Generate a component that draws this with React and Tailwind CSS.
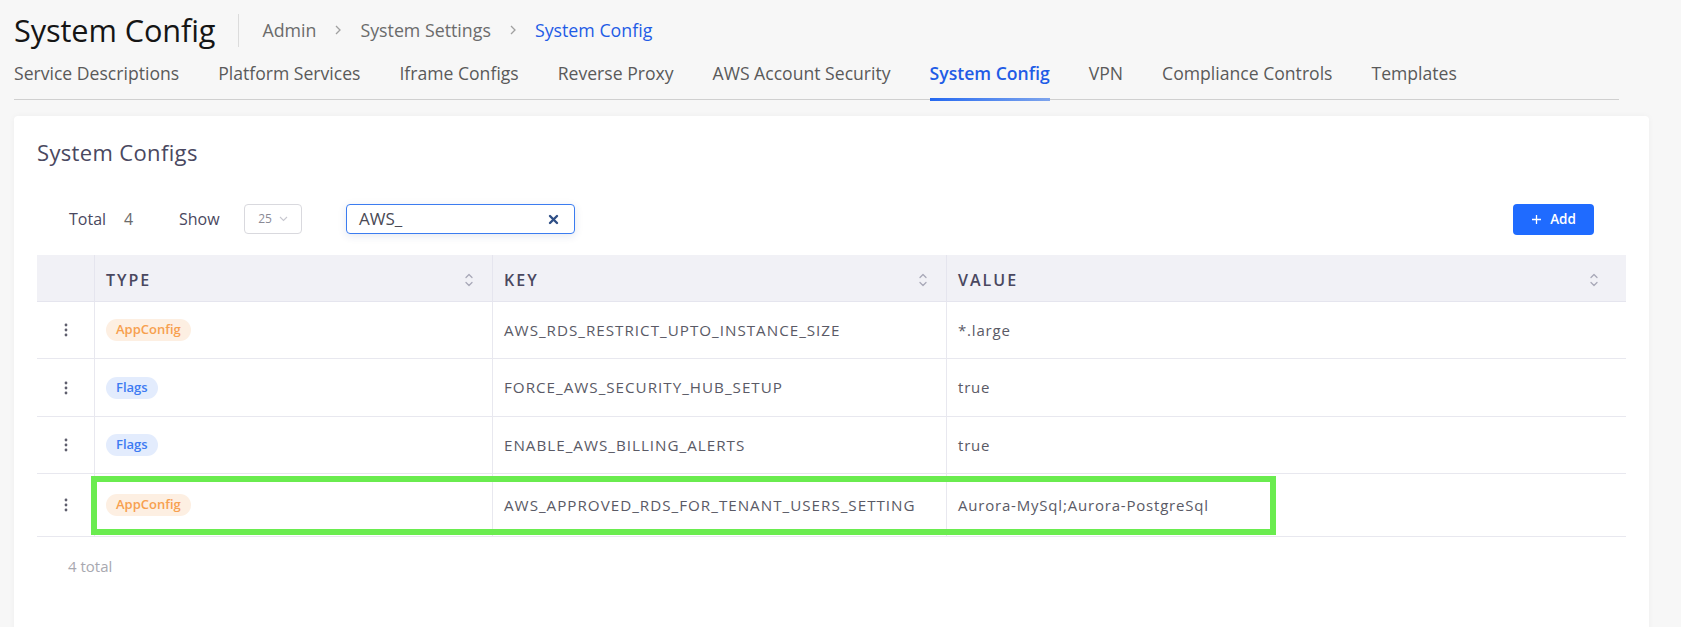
import React from "react";

const font = { fontFamily: '"Open Sans", "Noto Sans", sans-serif' };

function SortIcon() {
  return (
    <svg width="10" height="18" viewBox="0 0 10 18" fill="none" stroke="#a9a9b8" strokeWidth="1.3" strokeLinecap="round" strokeLinejoin="round">
      <path d="M2 6.5 L5 3.5 L8 6.5" />
      <path d="M2 11.5 L5 14.5 L8 11.5" />
    </svg>
  );
}

function Kebab() {
  return (
    <svg width="4" height="14" viewBox="0 0 4 14" fill="#5f5f6e">
      <circle cx="2" cy="2" r="1.4" />
      <circle cx="2" cy="7" r="1.4" />
      <circle cx="2" cy="12" r="1.4" />
    </svg>
  );
}

function Badge({ kind }) {
  if (kind === "AppConfig")
    return (
      <span className="inline-flex h-[22px] items-center rounded-full bg-[#fdefe2] px-[10px] text-[13px] font-semibold text-[#f7a04f]">
        AppConfig
      </span>
    );
  return (
    <span className="inline-flex h-[22px] items-center rounded-full bg-[#e3ecfd] px-[10px] text-[13px] font-semibold text-[#3d7bf2]">
      Flags
    </span>
  );
}

const rows = [
  { type: "AppConfig", key: "AWS_RDS_RESTRICT_UPTO_INSTANCE_SIZE", value: "*.large", h: "h-[57px]" },
  { type: "Flags", key: "FORCE_AWS_SECURITY_HUB_SETUP", value: "true", h: "h-[58px]" },
  { type: "Flags", key: "ENABLE_AWS_BILLING_ALERTS", value: "true", h: "h-[57px]" },
  { type: "AppConfig", key: "AWS_APPROVED_RDS_FOR_TENANT_USERS_SETTING", value: "Aurora-MySql;Aurora-PostgreSql", h: "h-[63px]", hl: true },
];

const tabs = [
  "Service Descriptions",
  "Platform Services",
  "Iframe Configs",
  "Reverse Proxy",
  "AWS Account Security",
  "System Config",
  "VPN",
  "Compliance Controls",
  "Templates",
];

export default function App() {
  return (
    <div className="min-h-[627px] w-[1681px] overflow-hidden bg-[#f7f7f7]" style={font}>
      {/* Header */}
      <div className="flex h-[60px] items-center pl-[14px]">
        <h1 className="text-[30.7px] font-medium leading-none tracking-[-0.1px] text-[#151515]">System Config</h1>
        <div className="ml-[23px] h-[33px] w-px bg-[#dcdcdc]" />
        <div className="ml-[23px] flex items-center text-[17.8px] text-[#6b6b6b]">
          <span>Admin</span>
          <span className="mx-[18px]">
            <svg width="8" height="12" viewBox="0 0 8 12" fill="none" stroke="#a0a0a0" strokeWidth="1.3"><path d="M2 2 L6 6 L2 10" /></svg>
          </span>
          <span>System Settings</span>
          <span className="mx-[18px]">
            <svg width="8" height="12" viewBox="0 0 8 12" fill="none" stroke="#a0a0a0" strokeWidth="1.3"><path d="M2 2 L6 6 L2 10" /></svg>
          </span>
          <span className="text-[#1f5ce6]">System Config</span>
        </div>
      </div>

      {/* Tabs */}
      <div className="ml-[14px] mr-[62px] flex h-[40px] gap-[39px] border-b border-[#d0d0d0]">
        {tabs.map((t) => {
          const active = t === "System Config";
          return (
            <div key={t} className="relative flex items-center pb-[12px] text-[17.6px] text-[#5a5a5a]">
              <span className={active ? "font-semibold text-[#1f5ce6]" : ""}>{t}</span>
              {active && (
                <div className="absolute bottom-[-2px] left-0 right-0 h-[3px] bg-gradient-to-r from-[#2468f0] to-[#7ea4ec]" />
              )}
            </div>
          );
        })}
      </div>

      {/* Card */}
      <div className="ml-[14px] mt-[16px] h-[520px] w-[1635px] rounded-t-[4px] bg-white px-[23px] pt-[21px] shadow-[0_0_6px_rgba(0,0,0,0.04)]">
        <h2 className="text-[22px] leading-[30px] tracking-[0.35px] text-[#4a4860]">System Configs</h2>

        {/* toolbar */}
        <div className="mt-[36px] flex h-[32px] items-center pl-[32px] pr-[32px]">
          <span className="w-[55px] text-[16px] font-medium text-[#4a4860]">Total</span>
          <span className="w-[55px] text-[16px] text-[#6b6b6b]">4</span>
          <span className="w-[65px] text-[16px] font-medium text-[#4a4860]">Show</span>
          <div className="flex h-[30px] w-[58px] items-center justify-center gap-[7px] rounded-[4px] border border-[#d9d9de] text-[12px] text-[#8a8a95]">
            <span>25</span>
            <svg width="9" height="6" viewBox="0 0 9 6" fill="none" stroke="#c8c8d0" strokeWidth="1.1"><path d="M1 1 L4.5 4.5 L8 1" /></svg>
          </div>
          <div className="ml-[44px] flex h-[30px] w-[229px] items-center rounded-[4px] border border-[#3b7cf0] pl-[12px] pr-[15px] shadow-[0_2px_8px_rgba(30,60,120,0.12)]">
            <span className="flex-1 text-[17px] text-[#4a4a55]">AWS_</span>
            <svg width="11" height="11" viewBox="0 0 11 11" stroke="#2f4f86" strokeWidth="2.4" strokeLinecap="round"><path d="M2 2 L9 9 M9 2 L2 9" /></svg>
          </div>
          <div className="flex-1" />
          <button className="flex h-[31px] w-[81px] items-center justify-center gap-[8px] rounded-[4px] bg-[#1f6bff] text-[13.5px] font-semibold text-white">
            <svg width="11" height="11" viewBox="0 0 11 11" stroke="white" strokeWidth="1.3"><path d="M5.5 1 V10 M1 5.5 H10" /></svg>
            <span>Add</span>
          </button>
        </div>

        {/* table */}
        <div className="mt-[20px] w-[1589px]">
          <div className="grid h-[47px] grid-cols-[57px_398px_454px_1fr] border-b border-[#e5e5ee] bg-[#f1f1f6] text-[16px] font-semibold tracking-[2px] text-[#4a4860]">
            <div />
            <div className="flex items-center justify-between border-l border-[#e5e5ee] pl-[11px] pr-[18px] pt-[4px]">
              <span>TYPE</span>
              <SortIcon />
            </div>
            <div className="flex items-center justify-between border-l border-[#e5e5ee] pl-[11px] pr-[18px] pt-[4px]">
              <span>KEY</span>
              <SortIcon />
            </div>
            <div className="flex items-center justify-between border-l border-[#e5e5ee] pl-[11px] pr-[27px] pt-[4px]">
              <span>VALUE</span>
              <SortIcon />
            </div>
          </div>
          {rows.map((r, i) => (
            <div key={i} className={`relative grid ${r.h} grid-cols-[57px_398px_454px_1fr] border-b border-[#e8e8ef] text-[15px] tracking-[0.8px] text-[#5a5a66]`}>
              <div className="flex items-center justify-center pl-[1px]">
                <Kebab />
              </div>
              <div className="flex items-center border-l border-[#e8e8ef] pl-[11px] tracking-normal">
                <Badge kind={r.type} />
              </div>
              <div className="flex items-center border-l border-[#e8e8ef] pl-[11px] text-[15.2px] tracking-[1px]">{r.key}</div>
              <div className="flex items-center border-l border-[#e8e8ef] pl-[11px]">{r.value}</div>
              {r.hl && (
                <div className="pointer-events-none absolute left-[54px] top-[2px] h-[59px] w-[1185px] border-[6px] border-[#6aec4f]" />
              )}
            </div>
          ))}
          <div className="pl-[31px] pt-[18px] text-[15px] text-[#a8a8b0]">4 total</div>
        </div>
      </div>
    </div>
  );
}
